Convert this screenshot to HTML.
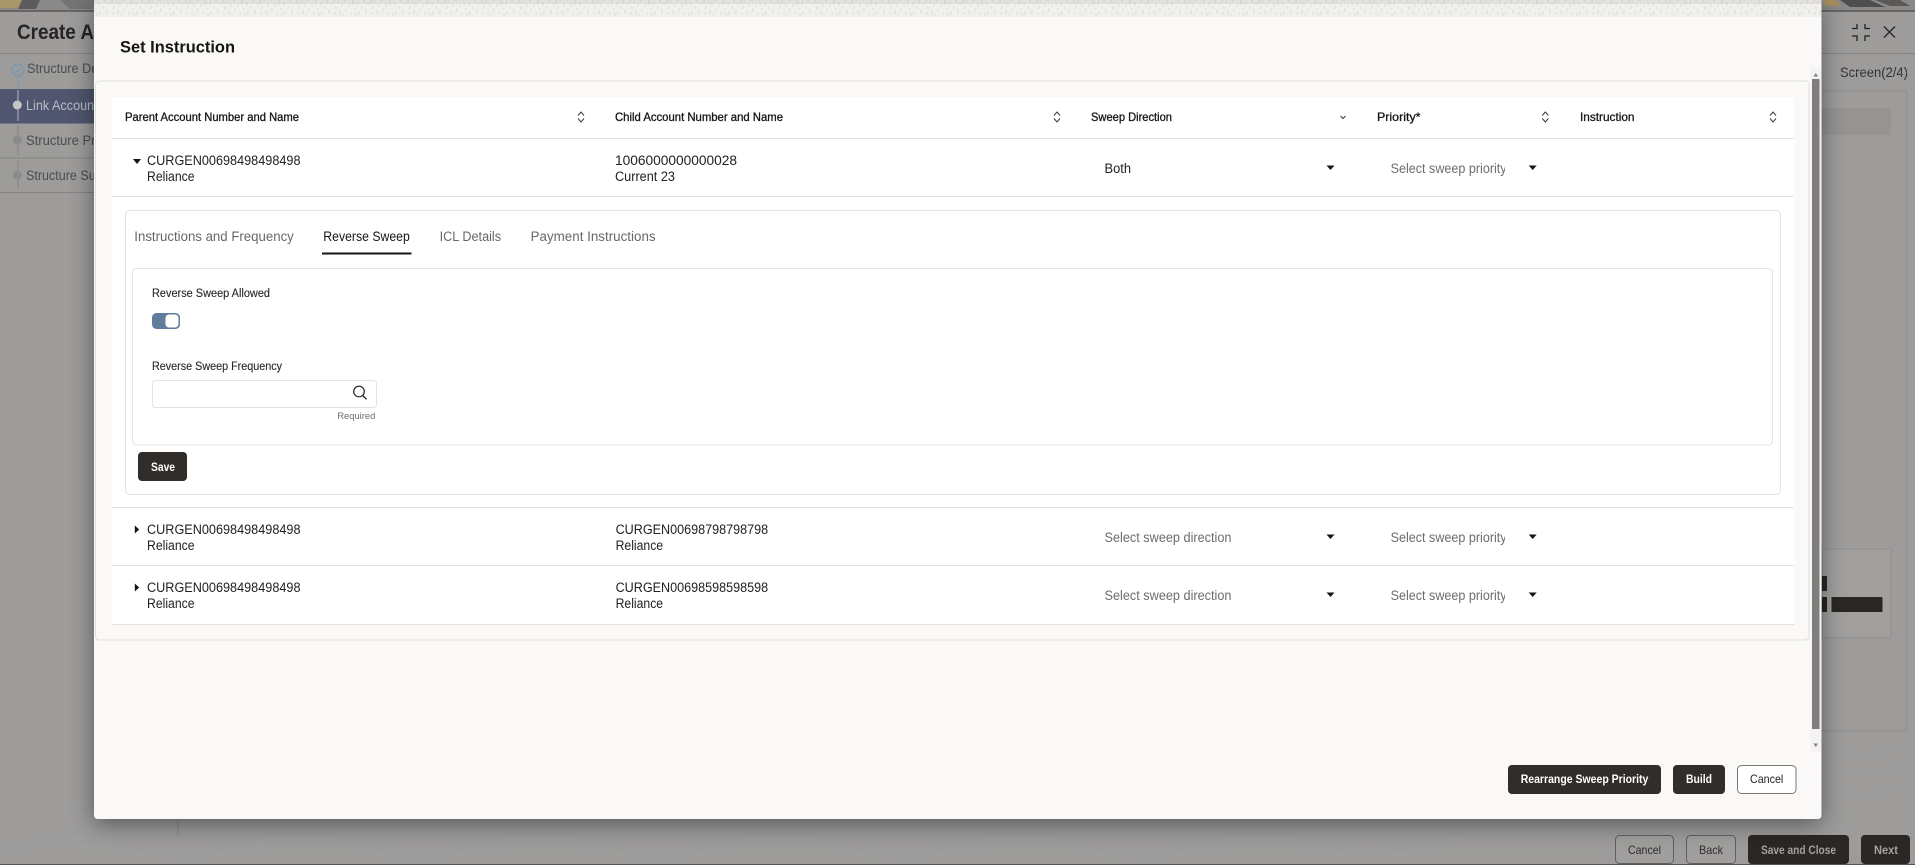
<!DOCTYPE html>
<html><head><meta charset="utf-8"><title>Set Instruction</title>
<style>
html,body{margin:0;padding:0;width:1915px;height:865px;overflow:hidden;background:#9d9c9b}
svg{display:block;position:absolute;left:0;top:0;filter:blur(.25px)}
text{font-family:"Liberation Sans",sans-serif;font-size:13.5px;fill:#232120}
.h{font-size:11.8px;fill:#161513;stroke:#161513;stroke-width:.3px}
.ph{fill:#6f6d6a}
.tab{font-size:13.5px;fill:#6a6865}
.lab{font-size:11.5px;fill:#2a2826;stroke:#2a2826;stroke-width:.12px}
.b{font-size:11.5px;font-weight:bold;fill:#fff}
.sort{fill:none;stroke:#3a3836;stroke-width:1}
.modal{filter:drop-shadow(0 5px 12px rgba(0,0,0,.45))}
</style></head><body>
<svg width="1915" height="865" viewBox="0 0 1915 865" xmlns="http://www.w3.org/2000/svg">
<defs>
<pattern id="noise" width="37" height="17" patternUnits="userSpaceOnUse">
<rect width="37" height="17" fill="#f1f0ee"/>
<path d="M1 0v4M3 6v3M5 1v2M7 10v5M9 3v4M12 0v2M13 8v4M16 4v3M18 12v3M20 0v5M22 8v2M25 2v4M26 11v4M29 6v3M31 0v3M33 9v5M35 3v2M2 12v3M10 13v2M23 13v3" stroke="#dcdbd8" stroke-width="1"/>
</pattern>
<clipPath id="pr"><rect x="1385" y="100" width="120" height="520"/></clipPath>
</defs>

<!-- background -->
<rect width="1915" height="865" fill="#9d9c9b"/>
<rect y="0" width="1915" height="10" fill="#8a8988"/>
<polygon points="0,0 22,0 18,8 0,8" fill="#a8966b"/>
<polygon points="22,0 40,0 36,9 18,9" fill="#5c5a5c"/>
<polygon points="60,0 94,0 94,9 70,9" fill="#757474"/>
<polygon points="1822,0 1835,0 1842,6 1826,6" fill="#a58f5e"/>
<polygon points="1840,0 1870,0 1885,7 1850,7" fill="#4f4e4e"/>
<polygon points="1875,0 1900,0 1910,6 1890,6" fill="#5a5958"/>
<rect y="10" width="1915" height="2" fill="#676665"/>
<rect y="53" width="1915" height="1" fill="#868584"/>
<text x="17" y="39" textLength="77" lengthAdjust="spacingAndGlyphs" style="font-size:21px;font-weight:bold;fill:#272523">Create A</text>

<!-- sidebar -->
<rect x="0" y="89" width="178" height="34.5" fill="#50566f"/>
<rect x="0" y="157.5" width="178" height="1" fill="#848382"/>
<rect x="0" y="192" width="178" height="1" fill="#848382"/>
<path d="M178 193V835" stroke="#8b8a89" stroke-width="1"/>
<path d="M18 76V86" stroke="#6f97bb" stroke-width="1"/>
<path d="M18 90V121" stroke="#b4b8c0" stroke-width="1"/>
<path d="M18 125V155M18 160V188" stroke="#858483" stroke-width="1"/>
<circle cx="18" cy="70" r="6" fill="none" stroke="#6f97bb" stroke-width="1.2"/>
<path d="M15.2 70l2 2.2 3.6-4" fill="none" stroke="#6f97bb" stroke-width="1.1"/>
<circle cx="17.3" cy="105" r="4.5" fill="#c6c6c6"/>
<circle cx="17.3" cy="140" r="4.5" fill="#8c8b8a"/>
<circle cx="17.3" cy="175" r="4.5" fill="#8c8b8a"/>
<text x="27" y="73" textLength="94" lengthAdjust="spacingAndGlyphs" style="font-size:13.5px;fill:#4d4c4b">Structure Details</text>
<text x="26" y="110" textLength="78" lengthAdjust="spacingAndGlyphs" style="font-size:13.5px;fill:#b9bdc6">Link Accounts</text>
<text x="26" y="145" textLength="97" lengthAdjust="spacingAndGlyphs" style="font-size:13.5px;fill:#4d4c4b">Structure Priority</text>
<text x="26" y="180" textLength="108" lengthAdjust="spacingAndGlyphs" style="font-size:13.5px;fill:#4d4c4b">Structure Summary</text>

<!-- right background -->
<path d="M1852 28.5h5v-4.5M1865 24v4.5h5M1852 36h5v5M1870 36h-5v5" fill="none" stroke="#222120" stroke-width="1.3"/>
<path d="M1884 26.5l11 11M1895 26.5l-11 11" fill="none" stroke="#2b2a29" stroke-width="1.4"/>
<text x="1840" y="77" textLength="68" lengthAdjust="spacingAndGlyphs" style="font-size:14px;fill:#333130">Screen(2/4)</text>
<path d="M1822 91H1904q3 0 3 3V728q0 3-3 3H1822" fill="none" stroke="#8f8e8d" stroke-width="1"/>
<rect x="1822" y="108" width="69" height="27" fill="#959493"/>
<rect x="1822" y="549" width="69" height="89" fill="#a1a09f" stroke="#8f8e8d" stroke-width="1"/>
<rect x="1822" y="576" width="5" height="15" fill="#2a2725"/>
<rect x="1822" y="597" width="5" height="15" fill="#2a2725"/>
<rect x="1831.5" y="597" width="51" height="15" fill="#2a2725"/>

<!-- contour texture hints -->
<g fill="none" stroke="#a6a5a4" stroke-width="1" opacity=".4">
<path d="M0 846q60-14 120-2t120 0 120 0 120 0 120 0 120 0 120 0 120 0 120 0 120 0 120 0 150-8"/>
<path d="M0 853q60-14 120-2t120 0 120 0 120 0 120 0 120 0 120 0 120 0 120 0 120 0 120 0 150-8"/>
<path d="M1822 70q40 10 90-15M1822 80q50 10 90-10M1822 740q40 30 90 0M1822 760q40 30 90 0M1822 780q40 30 90 0"/>
</g>

<!-- bottom bar -->
<rect y="864" width="1915" height="1" fill="#555453"/>
<rect x="1615.5" y="835.5" width="58" height="28" rx="4" fill="#a09f9e" stroke="#605f5e"/>
<rect x="1686.5" y="835.5" width="49" height="28" rx="4" fill="#a09f9e" stroke="#605f5e"/>
<rect x="1748" y="835" width="101" height="29" rx="4" fill="#2a2725"/>
<rect x="1861" y="835" width="49" height="29" rx="4" fill="#2a2725"/>
<text x="1628" y="854" textLength="33" lengthAdjust="spacingAndGlyphs" style="font-size:12px;fill:#2e2c2a">Cancel</text>
<text x="1699" y="854" textLength="24" lengthAdjust="spacingAndGlyphs" style="font-size:12px;fill:#2e2c2a">Back</text>
<text x="1761" y="854" textLength="75" lengthAdjust="spacingAndGlyphs" style="font-size:11.5px;font-weight:bold;fill:#a3a2a0">Save and Close</text>
<text x="1874" y="854" textLength="24" lengthAdjust="spacingAndGlyphs" style="font-size:11.5px;font-weight:bold;fill:#a3a2a0">Next</text>

<!-- modal -->
<g class="modal"><path d="M94 0H1821.5V815q0 4-4 4H98q-4 0-4-4Z" fill="#faf9f7"/></g>
<rect x="94" y="0" width="1727.5" height="17" fill="url(#noise)"/>
<rect x="94" y="0" width="1727.5" height="4" fill="#000" opacity=".06"/>

<text x="120" y="52.5" textLength="115" lengthAdjust="spacingAndGlyphs" style="font-size:17px;font-weight:bold;fill:#161513">Set Instruction</text>

<!-- inner panel -->
<path d="M95.5 636V85q0-4 4-4H1805q4 0 4 4V636q0 4-4 4H99.5q-4 0-4-4Z" fill="#faf9f7" stroke="#e0dfdc" stroke-width="1"/>

<!-- scrollbar -->
<rect x="1810.5" y="68" width="10.5" height="684" fill="#f4f3f1"/>
<rect x="1812" y="79" width="7.5" height="650" fill="#7f7e7d"/>
<path d="M1813.5 76.5h4.5l-2.25-3.5Z" fill="#807f7e"/>
<path d="M1813.5 743.5h4.5l-2.25 3.5Z" fill="#807f7e"/>

<!-- table -->
<rect x="112" y="97" width="1682" height="527.5" fill="#fff"/>
<g fill="#e2e1de">
<rect x="112" y="138" width="1682" height="1"/>
<rect x="112" y="196" width="1682" height="1"/>
<rect x="112" y="507" width="1682" height="1"/>
<rect x="112" y="565" width="1682" height="1"/>
<rect x="112" y="624" width="1682" height="1"/>
</g>

<!-- header -->
<text class="h" x="125" y="121" textLength="174" lengthAdjust="spacingAndGlyphs">Parent Account Number and Name</text>
<text class="h" x="615" y="121" textLength="168" lengthAdjust="spacingAndGlyphs">Child Account Number and Name</text>
<text class="h" x="1091" y="121" textLength="81" lengthAdjust="spacingAndGlyphs">Sweep Direction</text>
<text class="h" x="1377" y="121" textLength="43.5" lengthAdjust="spacingAndGlyphs">Priority*</text>
<text class="h" x="1580" y="121" textLength="54.5" lengthAdjust="spacingAndGlyphs">Instruction</text>
<path class="sort" d="M578 115.5l3-3.5 3 3.5M578 118.5l3 3.5 3-3.5"/>
<path class="sort" d="M1054 115.5l3-3.5 3 3.5M1054 118.5l3 3.5 3-3.5"/>
<path class="sort" d="M1340.5 116l2.5 2.5 2.5-2.5"/>
<path class="sort" d="M1542.3 115.5l3-3.5 3 3.5M1542.3 118.5l3 3.5 3-3.5"/>
<path class="sort" d="M1770 115.5l3-3.5 3 3.5M1770 118.5l3 3.5 3-3.5"/>

<!-- row 1 -->
<path d="M133 159h8l-4 5Z" fill="#161513"/>
<text x="147" y="165" textLength="153.5" lengthAdjust="spacingAndGlyphs">CURGEN00698498498498</text>
<text x="147" y="181" textLength="47.5" lengthAdjust="spacingAndGlyphs">Reliance</text>
<text x="615" y="165" textLength="122" lengthAdjust="spacingAndGlyphs">1006000000000028</text>
<text x="615" y="181" textLength="60" lengthAdjust="spacingAndGlyphs">Current 23</text>
<text x="1104.5" y="173" textLength="26.5" lengthAdjust="spacingAndGlyphs">Both</text>
<path d="M1326.5 165.5h8l-4 4.5Z" fill="#161513"/>
<text class="ph" x="1390.6" y="173" clip-path="url(#pr)" textLength="116" lengthAdjust="spacingAndGlyphs">Select sweep priority</text>
<path d="M1528.7 165.5h8l-4 4.5Z" fill="#161513"/>

<!-- tabs panel -->
<rect x="125.5" y="210.5" width="1655" height="284" rx="4" fill="#fff" stroke="#e4e3e0"/>
<text class="tab" x="134.3" y="241" textLength="159.5" lengthAdjust="spacingAndGlyphs">Instructions and Frequency</text>
<text class="tab" x="323.3" y="241" textLength="86.5" lengthAdjust="spacingAndGlyphs" style="fill:#161513">Reverse Sweep</text>
<text class="tab" x="439.6" y="241" textLength="61.5" lengthAdjust="spacingAndGlyphs">ICL Details</text>
<text class="tab" x="530.6" y="241" textLength="125" lengthAdjust="spacingAndGlyphs">Payment Instructions</text>
<rect x="322" y="252.5" width="89.5" height="2" fill="#161513"/>

<!-- form panel -->
<rect x="132.5" y="268.5" width="1640" height="176.5" rx="4" fill="#fff" stroke="#e4e3e0"/>
<text class="lab" x="152" y="297" textLength="118" lengthAdjust="spacingAndGlyphs">Reverse Sweep Allowed</text>
<rect x="152" y="313" width="28" height="16" rx="4.5" fill="#617d9c"/>
<rect x="165.5" y="314.5" width="13" height="13" rx="3.5" fill="#fff"/>
<text class="lab" x="152" y="370" textLength="130" lengthAdjust="spacingAndGlyphs">Reverse Sweep Frequency</text>
<rect x="152.5" y="380.5" width="224" height="27" rx="3" fill="#fff" stroke="#e4e3e0"/>
<circle cx="359" cy="391.5" r="5.3" fill="none" stroke="#232120" stroke-width="1.2"/>
<path d="M362.8 395.5l3.8 3.8" stroke="#232120" stroke-width="1.3"/>
<text x="337.3" y="419" textLength="38" lengthAdjust="spacingAndGlyphs" style="font-size:9.5px;fill:#6f6d6a">Required</text>
<rect x="138" y="452" width="49" height="29" rx="4" fill="#312d2a"/>
<text class="b" x="151" y="471" textLength="24" lengthAdjust="spacingAndGlyphs">Save</text>

<!-- row 2 -->
<path d="M134.8 525.5l4.4 4-4.4 4Z" fill="#161513"/>
<text x="147" y="534" textLength="153.5" lengthAdjust="spacingAndGlyphs">CURGEN00698498498498</text>
<text x="147" y="550" textLength="47.5" lengthAdjust="spacingAndGlyphs">Reliance</text>
<text x="615.6" y="534" textLength="152.5" lengthAdjust="spacingAndGlyphs">CURGEN00698798798798</text>
<text x="615.6" y="550" textLength="47.5" lengthAdjust="spacingAndGlyphs">Reliance</text>
<text class="ph" x="1104.5" y="542" textLength="127" lengthAdjust="spacingAndGlyphs">Select sweep direction</text>
<path d="M1326.5 534.5h8l-4 4.5Z" fill="#161513"/>
<text class="ph" x="1390.6" y="542" clip-path="url(#pr)" textLength="116" lengthAdjust="spacingAndGlyphs">Select sweep priority</text>
<path d="M1528.7 534.5h8l-4 4.5Z" fill="#161513"/>

<!-- row 3 -->
<path d="M134.8 583.5l4.4 4-4.4 4Z" fill="#161513"/>
<text x="147" y="592" textLength="153.5" lengthAdjust="spacingAndGlyphs">CURGEN00698498498498</text>
<text x="147" y="608" textLength="47.5" lengthAdjust="spacingAndGlyphs">Reliance</text>
<text x="615.6" y="592" textLength="152.5" lengthAdjust="spacingAndGlyphs">CURGEN00698598598598</text>
<text x="615.6" y="608" textLength="47.5" lengthAdjust="spacingAndGlyphs">Reliance</text>
<text class="ph" x="1104.5" y="600" textLength="127" lengthAdjust="spacingAndGlyphs">Select sweep direction</text>
<path d="M1326.5 592.5h8l-4 4.5Z" fill="#161513"/>
<text class="ph" x="1390.6" y="600" clip-path="url(#pr)" textLength="116" lengthAdjust="spacingAndGlyphs">Select sweep priority</text>
<path d="M1528.7 592.5h8l-4 4.5Z" fill="#161513"/>

<!-- footer buttons -->
<rect x="1508" y="765" width="153" height="29" rx="4" fill="#312d2a"/>
<text class="b" x="1520.7" y="783" textLength="127.7" lengthAdjust="spacingAndGlyphs">Rearrange Sweep Priority</text>
<rect x="1673" y="765" width="52" height="29" rx="4" fill="#312d2a"/>
<text class="b" x="1686" y="783" textLength="26" lengthAdjust="spacingAndGlyphs">Build</text>
<rect x="1737.5" y="765.5" width="58.5" height="28" rx="4" fill="#fff" stroke="#7a7672"/>
<text x="1750" y="783" textLength="33.3" lengthAdjust="spacingAndGlyphs" style="font-size:12px;fill:#232120">Cancel</text>
</svg>
</body></html>
